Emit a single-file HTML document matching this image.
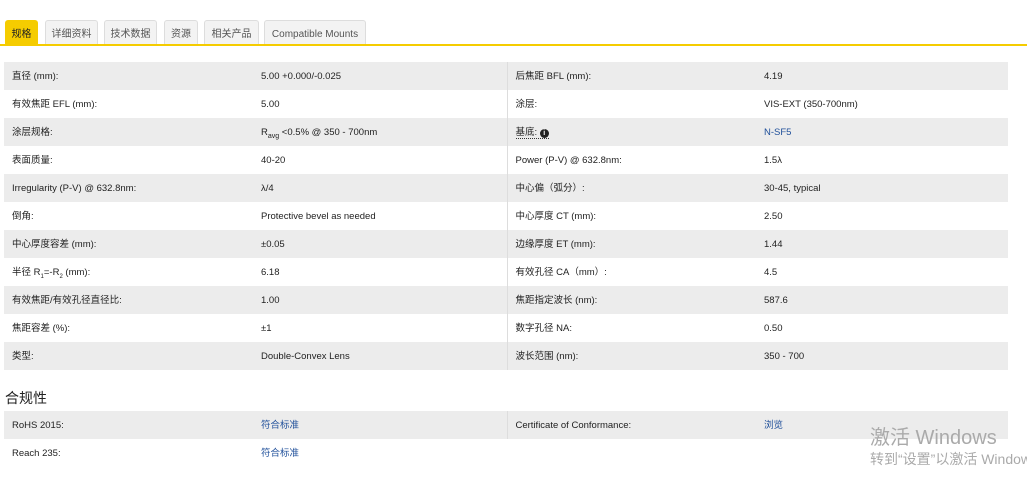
<!DOCTYPE html>
<html><head><meta charset="utf-8"><style>
body{margin:0;background:#fff;font-family:"Liberation Sans","Noto Sans CJK SC",sans-serif;font-size:9.5px;color:#222;width:1027px;height:487px;overflow:hidden;position:relative}
.tab{position:absolute;top:20px;height:24px;line-height:27px;text-align:center;background:#f3f3f3;border:1px solid #ddd;border-bottom:none;border-radius:3px 3px 0 0;color:#555;font-size:10px;box-sizing:border-box}
.tab.a{background:#f5cc00;border-color:#f5cc00;color:#222}
.line{position:absolute;top:44px;left:0;width:1027px;height:2px;background:#f5cc00}
table{position:absolute;left:4px;width:1004px;border-collapse:collapse}
td{height:28px;padding:2px 0 0 8px;box-sizing:border-box;vertical-align:middle;line-height:12px}
tr:nth-child(odd) td{background:#ececec}
td.s{border-right:1px solid #ddd}
sub{vertical-align:baseline;position:relative;top:3px;line-height:0}
a{color:#1f4f9a;text-decoration:none}
h3{position:absolute;top:388px;left:5px;margin:0;font-size:14px;font-weight:normal;color:#222}
.wm{position:absolute;left:870px;color:#aaa;white-space:nowrap}
</style></head><body>
<div class="tab a" style="left:5px;width:33px">规格</div>
<div class="tab" style="left:45px;width:53px">详细资料</div>
<div class="tab" style="left:104px;width:53px">技术数据</div>
<div class="tab" style="left:164px;width:34px">资源</div>
<div class="tab" style="left:204px;width:55px">相关产品</div>
<div class="tab" style="left:264px;width:102px">Compatible Mounts</div>
<div class="line"></div>
<table style="top:62px">
<colgroup><col style="width:249px"><col style="width:254px"><col style="width:249px"><col style="width:252px"></colgroup>
<tr><td>直径 (mm):</td><td class="s">5.00 +0.000/-0.025</td><td>后焦距 BFL (mm):</td><td>4.19</td></tr>
<tr><td>有效焦距 EFL (mm):</td><td class="s">5.00</td><td>涂层:</td><td>VIS-EXT (350-700nm)</td></tr>
<tr><td>涂层规格:</td><td class="s">R<sub style="font-size:7px">avg</sub> &lt;0.5% @ 350 - 700nm</td><td><span style="border-bottom:1px dotted #333">基底: <b style="display:inline-block;width:9px;height:9px;border-radius:50%;background:#222;color:#fff;font-size:7px;line-height:9px;text-align:center">i</b></span></td><td><a>N-SF5</a></td></tr>
<tr><td>表面质量:</td><td class="s">40-20</td><td>Power (P-V) @ 632.8nm:</td><td>1.5λ</td></tr>
<tr><td>Irregularity (P-V) @ 632.8nm:</td><td class="s">λ/4</td><td>中心偏（弧分）:</td><td>30-45, typical</td></tr>
<tr><td>倒角:</td><td class="s">Protective bevel as needed</td><td>中心厚度 CT (mm):</td><td>2.50</td></tr>
<tr><td>中心厚度容差 (mm):</td><td class="s">±0.05</td><td>边缘厚度 ET (mm):</td><td>1.44</td></tr>
<tr><td>半径 R<sub style="font-size:6px">1</sub>=-R<sub style="font-size:6px">2</sub> (mm):</td><td class="s">6.18</td><td>有效孔径 CA（mm）:</td><td>4.5</td></tr>
<tr><td>有效焦距/有效孔径直径比:</td><td class="s">1.00</td><td>焦距指定波长 (nm):</td><td>587.6</td></tr>
<tr><td>焦距容差 (%):</td><td class="s">±1</td><td>数字孔径 NA:</td><td>0.50</td></tr>
<tr><td>类型:</td><td class="s">Double-Convex Lens</td><td>波长范围 (nm):</td><td>350 - 700</td></tr>
</table>
<h3>合规性</h3>
<table style="top:411px">
<colgroup><col style="width:249px"><col style="width:254px"><col style="width:249px"><col style="width:252px"></colgroup>
<tr><td>RoHS 2015:</td><td class="s"><a>符合标准</a></td><td>Certificate of Conformance:</td><td><a>浏览</a></td></tr>
<tr><td>Reach 235:</td><td><a>符合标准</a></td><td></td><td></td></tr>
</table>
<div class="wm" style="top:421px;font-size:20px">激活 Windows</div>
<div class="wm" style="top:449px;font-size:14px">转到“设置”以激活 Windows。</div>
</body></html>
